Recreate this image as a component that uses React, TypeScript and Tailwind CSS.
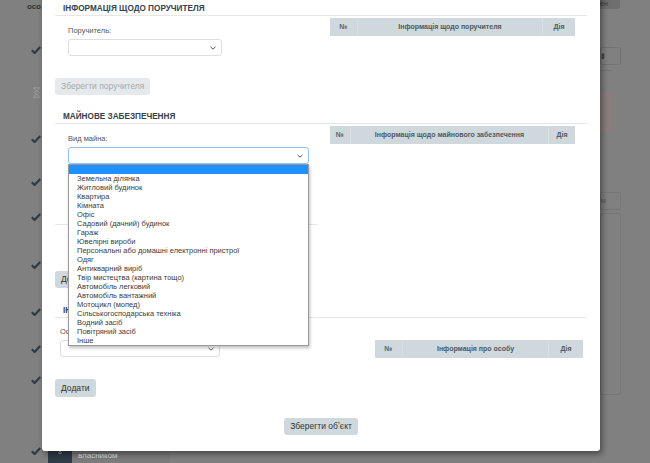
import React from 'react';

const propertyTypes = [
  'Земельна ділянка',
  'Житловий будинок',
  'Квартира',
  'Кімната',
  'Офіс',
  'Садовий (дачний) будинок',
  'Гараж',
  'Ювелірні вироби',
  'Персональні або домашні електронні пристрої',
  'Одяг',
  'Антикварний виріб',
  'Твір мистецтва (картина тощо)',
  'Автомобіль легковий',
  'Автомобіль вантажний',
  'Мотоцикл (мопед)',
  'Сільськогосподарська техніка',
  'Водний засіб',
  'Повітряний засіб',
  'Інше',
];

const Chevron = () => (
  <svg width="6" height="4" viewBox="0 0 6 4" className="shrink-0">
    <polyline points="0.5,0.8 3,3.2 5.5,0.8" fill="none" stroke="#555" strokeWidth="1" />
  </svg>
);

const Check = () => (
  <svg width="10" height="8" viewBox="0 0 10 8">
    <polyline points="0.8,4.2 3.6,7 9.2,1" fill="none" stroke="#2e3b48" strokeWidth="2.2" />
  </svg>
);

const Hourglass = () => (
  <svg width="9" height="11" viewBox="0 0 9 11">
    <path d="M1 0.8h7M1 10.2h7M1.8 0.8c0 3 5.4 3.4 5.4 4.7S1.8 7.2 1.8 10.2M7.2 0.8c0 3-5.4 3.4-5.4 4.7s5.4 1.7 5.4 4.7" fill="none" stroke="#9a9a9a" strokeWidth="1" />
  </svg>
);

const SectionTitle = ({ children }: { children: React.ReactNode }) => (
  <div className="h-[14px] border-b border-[#e7e7e7] pl-[8px] text-[8.2px] leading-[13px] font-bold text-[#37424c] uppercase">
    {children}
  </div>
);

const TableHead = ({ cols, title }: { cols: string; title: string }) => (
  <div className={`grid ${cols} h-[18px] bg-[#cfd8dc] text-[7px] font-bold text-[#4d5a63] leading-[18px] text-center`}>
    <div>№</div>
    <div className="border-l border-[#d8e0e3]">{title}</div>
    <div className="border-l border-[#d8e0e3]">Дія</div>
  </div>
);

const Select = ({ width, focused }: { width: string; focused?: boolean }) => (
  <div
    className={`${width} h-[17px] rounded-[3px] border bg-white flex items-center justify-end pr-[5px] ${
      focused ? 'border-[#8fc2f2]' : 'border-[#dedede]'
    }`}
  >
    <Chevron />
  </div>
);

export default function App() {
  return (
    <div className="relative w-[650px] h-[463px] overflow-hidden bg-[#808080] font-['Liberation_Sans',Arial,sans-serif]">
      {/* dimmed page behind the modal */}
      <div className="flex h-full">
        <div className="w-[42px] flex flex-col items-end pr-[1px]">
          <div className="pt-[1px] h-[12px] text-[8px] font-bold text-[#2b3440] leading-[12px]">осо</div>
          <div className="mt-[32px] h-[12px] flex items-center"><Check /></div>
          <div className="mt-[30px] h-[12px] flex items-center"><Hourglass /></div>
          <div className="mt-[35px] h-[12px] flex items-center"><Check /></div>
          <div className="mt-[31px] h-[12px] flex items-center"><Check /></div>
          <div className="mt-[23px] h-[12px] flex items-center"><Check /></div>
          <div className="mt-[36px] h-[12px] flex items-center"><Check /></div>
          <div className="mt-[35px] h-[12px] flex items-center"><Check /></div>
          <div className="mt-[25px] h-[12px] flex items-center"><Check /></div>
          <div className="mt-[19px] h-[12px] flex items-center"><Check /></div>
          <div className="mt-[59px] h-[12px] flex items-center"><Check /></div>
        </div>
        <div className="w-[558px] flex flex-col justify-end pl-[6px]">
          <div className="flex h-[20px]">
            <div className="w-[24px] bg-[#2f3b48] text-[7px] text-[#aab] text-center leading-[18px]">8</div>
            <div className="w-[98px] bg-[#7b7b7b] pl-[6px] pt-[8px] text-[8px] leading-[10px] text-[#d9dde0]">власником</div>
          </div>
        </div>
        <div className="w-[50px] flex flex-col">
          <div className="w-[20px] h-[9px] bg-[#6f6f6f] rounded-br-[2px] text-[7px] leading-[8px] text-[#3a3a3a]">ен</div>
          <div className="mt-[38px] w-[21px] h-[18px] border border-[#727272] rounded-[2px] text-[7px] text-[#444] leading-[16px]">▮</div>
          <div className="mt-[5px] w-[12px] border-t border-[#767676]" />
          <div className="mt-[22px] w-[12px] h-[39px] bg-[#8a7d7d]" />
          <div className="mt-[60px] w-[21px] h-[18px] border border-[#767676] rounded-[2px] text-[7px] text-[#555] leading-[16px]">м</div>
          <div className="mt-[3px] w-[21px] h-[182px] border border-[#767676] rounded-[2px]" />
        </div>
      </div>

      {/* modal */}
      <div className="absolute left-[42px] top-[-10px] w-[558px] bg-white rounded-[3px] shadow-[2px_3px_6px_rgba(0,0,0,0.45)] px-[13px] pt-[12px] pb-[16px]">
        <SectionTitle>Інформація щодо поручителя</SectionTitle>
        <div className="grid grid-cols-[275px_245px]">
          <div className="pl-[13px]">
            <div className="mt-[10px] h-[10px] text-[7.5px] leading-[10px] text-[#555]">Поручитель:</div>
            <div className="mt-[3px]">
              <Select width="w-[154px]" />
            </div>
          </div>
          <div className="pt-[2px]">
            <TableHead cols="grid-cols-[27px_185px_33px]" title="Інформація щодо поручителя" />
          </div>
        </div>
        <button className="mt-[22px] h-[17px] px-[6px] rounded-[3px] bg-[#e5e9ec] text-[8.5px] text-[#a3abb0] leading-[17px]">
          Зберегти поручителя
        </button>

        <div className="mt-[14px]">
          <SectionTitle>Майнове забезпечення</SectionTitle>
        </div>
        <div className="grid grid-cols-[275px_245px]">
          <div className="pr-[12px]">
            <div className="pl-[13px]">
              <div className="mt-[10px] h-[10px] text-[7.5px] leading-[10px] text-[#555]">Вид майна:</div>
              <div className="mt-[3px] relative">
                <Select width="w-[241px]" focused />
                {/* open option list */}
                <div className="absolute left-0 top-full z-10 w-[241px] bg-white border border-[#9a9a9a] shadow-[1px_2px_3px_rgba(0,0,0,0.25)]">
                  <div className="h-[9px] bg-[#1e90ff]" />
                  {propertyTypes.map((t) => (
                    <div key={t} className="h-[9px] pl-[8px] text-[7.5px] leading-[9px] text-[#3b3b3b] whitespace-nowrap">
                      {t}
                    </div>
                  ))}
                </div>
              </div>
            </div>
            <div className="mt-[60px] border-t border-[#e7e7e7]" />
          </div>
          <div className="pt-[2px]">
            <TableHead cols="grid-cols-[20px_198px_27px]" title="Інформація щодо майнового забезпечення" />
          </div>
        </div>
        <button className="mt-[46px] h-[17px] px-[6px] rounded-[3px] bg-[#cfd8dc] text-[8.5px] text-[#333] leading-[17px]">
          Додати
        </button>

        <div className="mt-[15px]">
          <SectionTitle>Інформація щодо власника</SectionTitle>
        </div>
        <div className="grid grid-cols-[320px_208px]">
          <div className="pl-[5px]">
            <div className="mt-[9px] h-[10px] text-[7.5px] leading-[10px] text-[#555]">Особа:</div>
            <div className="mt-[3px]">
              <Select width="w-[160px]" />
            </div>
          </div>
          <div className="pt-[22px]">
            <TableHead cols="grid-cols-[27px_146px_35px]" title="Інформація про особу" />
          </div>
        </div>
        <button className="mt-[21px] h-[18px] px-[6px] rounded-[3px] bg-[#cfd8dc] text-[8.5px] text-[#333] leading-[18px]">
          Додати
        </button>
        <div className="mt-[20px] flex justify-center">
          <button className="h-[17px] px-[6px] rounded-[3px] bg-[#cfd8dc] text-[8.5px] text-[#333] leading-[17px]">
            Зберегти об&#700;єкт
          </button>
        </div>
      </div>
    </div>
  );
}
